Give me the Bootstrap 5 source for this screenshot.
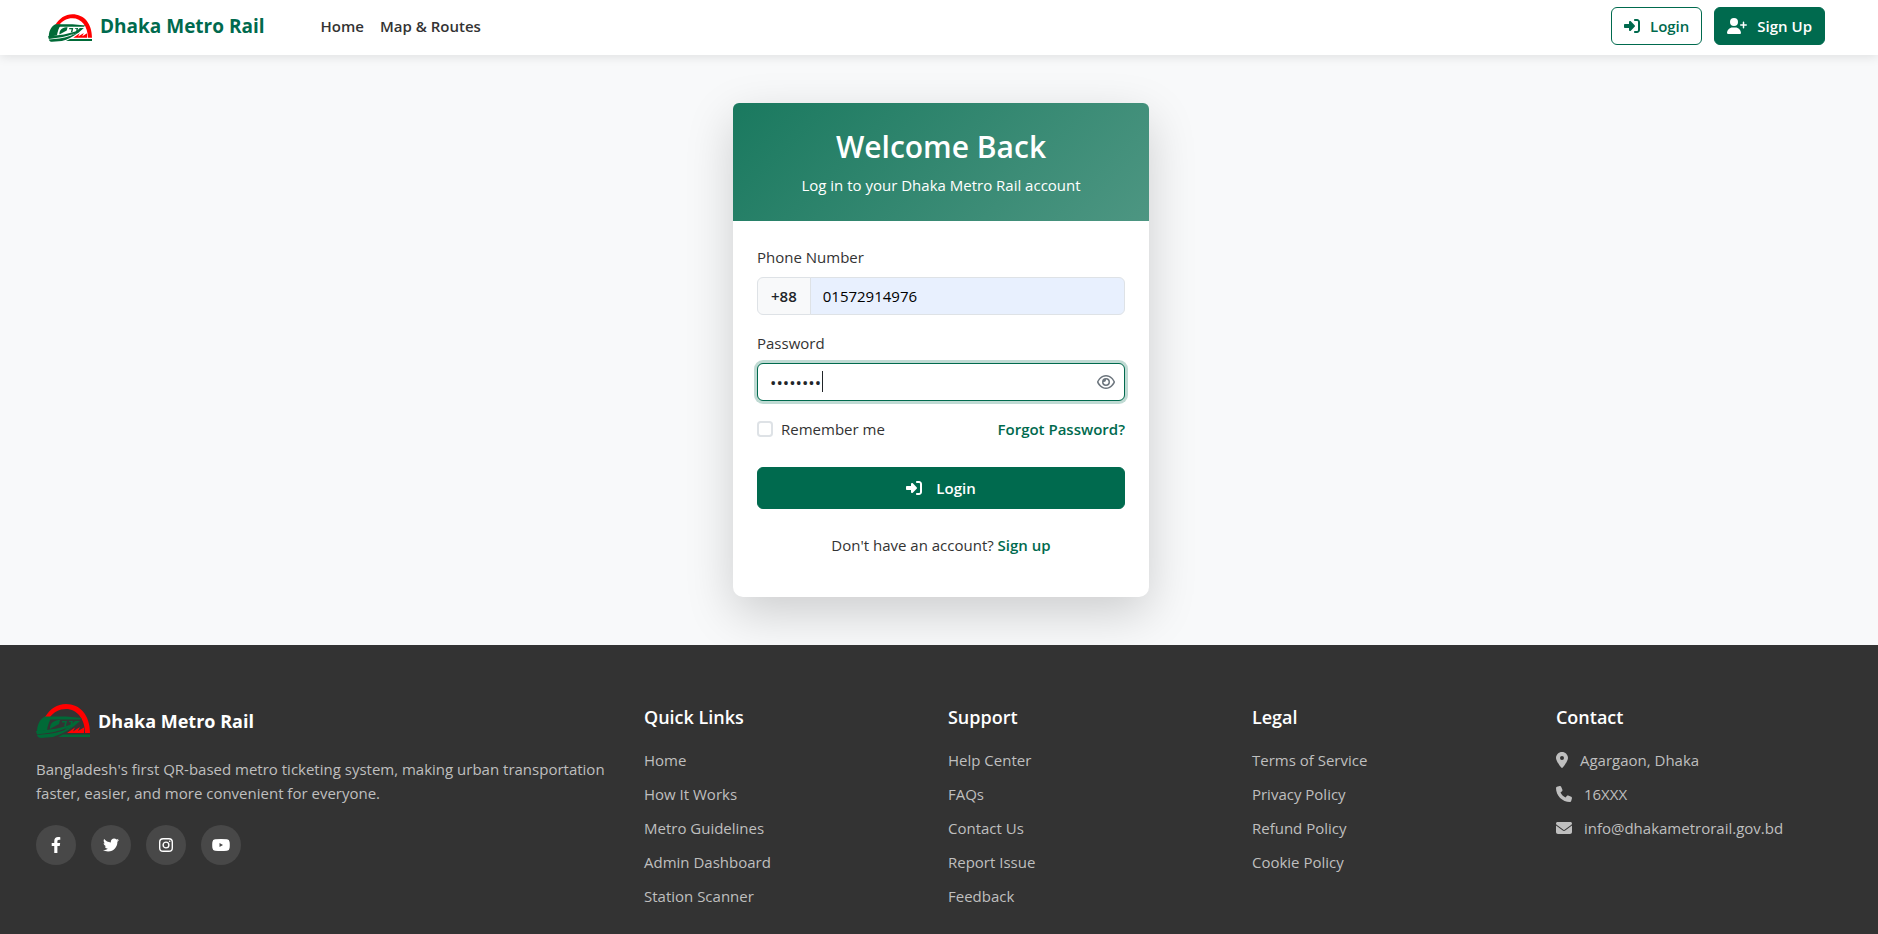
<!DOCTYPE html>
<html lang="en">
<head>
<meta charset="utf-8">
<meta name="viewport" content="width=device-width, initial-scale=1">
<title>Login - Dhaka Metro Rail</title>
<link href="https://cdn.jsdelivr.net/npm/bootstrap@5.3.0/dist/css/bootstrap.min.css" rel="stylesheet">
<style>
:root { --brand: #006a4e; --ink: #333; }
body { font-family: "Open Sans", "Noto Sans", sans-serif; font-size: 15px; line-height: 24px; color: var(--ink); background: #f8f9fa; }
svg { display: block; flex: none; }
a { color: var(--brand); }
.topbar { height: 55px; padding: 0 53px 3px 48px; background: #fff; box-shadow: 0 2px 10px rgba(0,0,0,.1); z-index: 2; }
.brand-name { font-size: 19px; font-weight: 700; }
.topbar .nav-link { color: var(--ink); font-weight: 600; padding: 0 8px; }
.btn-brand, .btn-line { font-size: 15px; font-weight: 600; line-height: 24px; border: 1px solid var(--brand); border-radius: 6px; padding: 6px 12px; display: flex; align-items: center; justify-content: center; gap: 10px; }
.btn-brand { background: var(--brand); color: #fff; }
.btn-line { color: var(--brand); background: #fff; }
.login-area { padding: 48px 0 48px 4px; }
.login-card { width: 416px; background: #fff; border-radius: 10px; box-shadow: 0 16px 48px rgba(0,0,0,.176); }
.login-head { height: 118px; padding-top: 24px; color: #fff; border-radius: 6px 6px 0 0; background: linear-gradient(135deg, #1a795f, #4d9682); }
.login-head h1 { font-size: 30px; font-weight: 600; line-height: 40px; margin: 0 0 6px; }
.login-body { padding: 24px 24px 40px; }
.form-label { margin-bottom: 8px; }
.field { height: 38px; font-size: 15px; padding: 6px 12px; border-color: #dee2e6; border-radius: 6px; }
.filled, .filled:focus { background: #e8f0fe; color: #000; }
.prefix { font-size: 15px; font-weight: 600; background: #f8f9fa; border-color: #dee2e6; border-radius: 6px; padding: 6px 13px; color: #212529; }
.field.secret, .field.secret:focus { font-size: 17px; caret-color: transparent; border-color: var(--brand); box-shadow: 0 0 0 3px rgba(0,106,78,.25); }
.cursor-bar { position: absolute; left: 65px; top: 8px; width: 1px; height: 21px; background: #212529; }
.eye { position: absolute; top: 0; right: 10px; height: 38px; padding: 0; border: 0; background: none; color: #6c757d; }
.form-check-input { width: 16px; height: 16px; margin: 0; border: 2px solid #dee2e6; }
.login-options { margin-bottom: 26px; }
.page-foot { background: #333; color: #bfbfbf; padding: 56px 42px 14px 36px; }
.page-foot .row { --bs-gutter-x: 24px; }
.page-foot h2 { font-size: 18px; font-weight: 600; line-height: 22px; color: #fff; margin: 5px 0 20px; }
.page-foot ul a, .page-foot ul li { color: #bfbfbf; text-decoration: none; }
.page-foot li { margin-bottom: 10px; }
.foot-brand { font-size: 18px; font-weight: 700; color: #fff; }
.foot-text { margin-bottom: 20px; }
.social-row { gap: 15px; }
.social { width: 40px; height: 40px; border-radius: 50%; background: #484848; color: #fff; display: flex; align-items: center; justify-content: center; }
</style>
<script src="https://cdn.jsdelivr.net/npm/bootstrap@5.3.0/dist/js/bootstrap.bundle.min.js"></script>
</head>
<body class="d-flex flex-column min-vh-100">
<svg width="0" height="0" class="position-absolute" aria-hidden="true">
<defs>
<symbol id="logo" viewBox="0 0 54 34">
<path d="M9 13C14 5 21 0 30 0c14 0 24 11 24 29h-5C49 15 41 5 30 5c-7 0-12 3-16 8z" fill="#f00"/>
<path d="M8 12.500h22l16 1.500-2 1.500H13z" fill="#006a37"/>
<path d="M8 13h8c-3 4-4 8-5 13L1 28C1 22 3 16 8 13z" fill="#006a37"/>
<path d="M14 23c1-5 5-7 10-7l-1 4-9 5zM26 17h5l-1 5-2 .5 1-4h-3zM33 17h4l-1 4h-1.500l.5-3h-2zM39 17h5l-7 6-9 3 8-6z" fill="#006a37"/>
<path d="M0 27l12-1.200c10-1 20-3.500 30-8-9 6-17 9-28 11L1 30.500z" fill="#006a37"/>
<path d="M1 31l13-1.200c9-1.500 17-4 24-8-7 6-14 9-21 11.200L5 34c-2 0-3.500-1-4-3z" fill="#006a37"/>
<path d="M31 29l8-5.500-2 4 7-4.500-2 4 6-3.500V29z" fill="#f00"/>
<path d="M27 30.500h27V33H22z" fill="#006a37"/>
</symbol>
<symbol id="login" viewBox="0 0 512 512"><path fill="currentColor" d="M217.900 105.900L340.700 228.700c7.200 7.200 11.300 17.100 11.300 27.300s-4.100 20.100-11.300 27.300L217.900 406.100c-6.400 6.400-15 9.900-24 9.900c-18.700 0-33.900-15.200-33.900-33.900V320H32c-17.700 0-32-14.300-32-32V224c0-17.700 14.300-32 32-32h128V129.900c0-18.700 15.200-33.900 33.900-33.900c9 0 17.600 3.600 24 9.900zM352 416h64c17.700 0 32-14.300 32-32V128c0-17.700-14.300-32-32-32H352c-17.700 0-32-14.300-32-32s14.300-32 32-32h64c53 0 96 43 96 96V384c0 53-43 96-96 96H352c-17.700 0-32-14.300-32-32s14.300-32 32-32z"/></symbol>
</defs>
</svg>

<nav class="topbar navbar navbar-expand flex-nowrap">
<a class="d-flex align-items-center text-decoration-none" href="#"><svg class="mt-1" width="44" height="28"><use href="#logo"/></svg><span class="brand-name ms-2">Dhaka Metro Rail</span></a>
<div class="navbar-nav ms-5 me-auto"><a class="nav-link" href="#">Home</a><a class="nav-link" href="#">Map &amp; Routes</a></div>
<div class="d-flex gap-2">
<a class="btn-line text-decoration-none me-1" href="#"><svg width="16" height="16"><use href="#login"/></svg>Login</a>
<a class="btn-brand text-decoration-none" href="#"><svg width="20" height="16" viewBox="0 0 640 512" fill="currentColor"><path d="M96 128a128 128 0 1 1 256 0A128 128 0 1 1 96 128zM0 482.300C0 383.800 79.800 304 178.300 304h91.400C368.200 304 448 383.800 448 482.300c0 16.400-13.300 29.700-29.700 29.700H29.700C13.300 512 0 498.700 0 482.300zM504 312V248H440c-13.300 0-24-10.700-24-24s10.700-24 24-24h64V136c0-13.300 10.700-24 24-24s24 10.700 24 24v64h64c13.300 0 24 10.700 24 24s-10.700 24-24 24H552v64c0 13.300-10.700 24-24 24s-24-10.700-24-24z"/></svg>Sign Up</a>
</div>
</nav>

<main class="login-area d-flex justify-content-center">
<section class="login-card">
<header class="login-head text-center"><h1>Welcome Back</h1><p class="m-0">Log in to your Dhaka Metro Rail account</p></header>
<form class="login-body">
<div class="mb-3">
<label class="form-label" for="phone">Phone Number</label>
<div class="input-group"><span class="prefix input-group-text">+88</span><input class="field filled form-control" id="phone" type="tel" value="01572914976"></div>
</div>
<label class="form-label" for="password">Password</label>
<div class="position-relative mb-3">
<input class="field secret form-control" id="password" type="password" value="password" autofocus>
<span class="cursor-bar" aria-hidden="true"></span>
<button class="eye" type="button" aria-label="Show password"><svg width="18" height="16" viewBox="0 0 576 512" fill="currentColor"><path d="M288 80c-65.200 0-118.800 29.600-159.900 67.700C89.600 183.500 63 226 49.400 256c13.600 30 40.200 72.500 78.600 108.300C169.200 402.400 222.800 432 288 432s118.800-29.600 159.900-67.700C486.400 328.500 513 286 526.600 256c-13.600-30-40.200-72.500-78.600-108.300C406.800 109.600 353.200 80 288 80zM95.400 112.600C142.500 68.800 207.200 32 288 32s145.500 36.800 192.600 80.600c46.800 43.500 78.100 95.400 93 131.100c3.300 7.900 3.300 16.700 0 24.600c-14.900 35.700-46.200 87.700-93 131.100C433.500 443.200 368.800 480 288 480s-145.500-36.800-192.600-80.600C48.600 356 17.300 304 2.500 268.300c-3.300-7.900-3.300-16.700 0-24.600C17.300 208 48.600 156 95.400 112.600zM288 336c44.200 0 80-35.800 80-80s-35.800-80-80-80c-.700 0-1.300 0-2 0c1.300 5.100 2 10.500 2 16c0 35.300-28.700 64-64 64c-5.500 0-10.900-.7-16-2c0 .7 0 1.300 0 2c0 44.200 35.800 80 80 80zm0-208a128 128 0 1 1 0 256 128 128 0 1 1 0-256z"/></svg></button>
</div>
<div class="login-options d-flex justify-content-between align-items-center">
<div class="d-flex align-items-center gap-2"><input class="form-check-input" type="checkbox" id="remember"><label for="remember">Remember me</label></div>
<a class="fw-semibold text-decoration-none" href="#">Forgot Password?</a>
</div>
<button class="btn-brand w-100 mb-4 py-2" type="submit"><svg width="16" height="16" class="me-1"><use href="#login"/></svg>Login</button>
<p class="text-center m-0">Don't have an account? <a class="fw-semibold text-decoration-none" href="#">Sign up</a></p>
</form>
</section>
</main>

<footer class="page-foot flex-grow-1">
<div class="row">
<div class="col-4">
<div class="d-flex align-items-center mb-3"><svg width="54" height="40"><use href="#logo"/></svg><span class="foot-brand ms-2">Dhaka Metro Rail</span></div>
<p class="foot-text">Bangladesh's first QR-based metro ticketing system, making urban transportation faster, easier, and more convenient for everyone.</p>
<div class="social-row d-flex">
<a class="social" href="#" aria-label="Facebook"><svg width="10" height="16" viewBox="0 0 320 512" fill="currentColor"><path d="M279.140 288l14.220-92.660h-88.910v-60.130c0-25.350 12.420-50.060 52.240-50.060h40.420V6.260S260.430 0 225.360 0c-73.220 0-121.080 44.380-121.080 124.720v70.620H22.890V288h81.390v224h100.170V288z"/></svg></a>
<a class="social" href="#" aria-label="Twitter"><svg width="16" height="16" viewBox="0 0 512 512" fill="currentColor"><path d="M459.370 151.716c.325 4.548.325 9.097.325 13.645 0 138.720-105.583 298.558-298.558 298.558-59.452 0-114.680-17.219-161.137-47.106 8.447.974 16.568 1.299 25.340 1.299 49.055 0 94.213-16.568 130.274-44.832-46.132-.975-84.792-31.188-98.112-72.772 6.498.974 12.995 1.624 19.818 1.624 9.421 0 18.843-1.300 27.614-3.573-48.081-9.747-84.143-51.980-84.143-102.985v-1.299c13.969 7.797 30.214 12.670 47.431 13.319-28.264-18.843-46.781-51.005-46.781-87.391 0-19.492 5.197-37.360 14.294-52.954 51.655 63.675 129.300 105.258 216.365 109.807-1.624-7.797-2.599-15.918-2.599-24.040 0-57.828 46.782-104.934 104.934-104.934 30.213 0 57.502 12.670 76.670 33.137 23.715-4.548 46.456-13.320 66.599-25.340-7.798 24.366-24.366 44.833-46.132 57.827 21.117-2.273 41.584-8.122 60.426-16.243-14.292 20.791-32.161 39.308-52.628 54.253z"/></svg></a>
<a class="social" href="#" aria-label="Instagram"><svg width="14" height="14" viewBox="0 0 14 14" fill="none" stroke="currentColor" stroke-width="1.400"><rect x=".7" y=".7" width="12.600" height="12.600" rx="3.400"/><circle cx="7" cy="7" r="2.900"/><circle cx="10.700" cy="3.300" r=".8" fill="currentColor" stroke="none"/></svg></a>
<a class="social" href="#" aria-label="YouTube"><svg width="18" height="12" viewBox="0 0 18 12"><path fill="currentColor" fill-rule="evenodd" d="M3 .2Q9-.2 15 .2Q17.300.5 17.600 3Q18 6 17.600 9Q17.300 11.500 15 11.800Q9 12.200 3 11.800Q.7 11.500.4 9Q0 6 .4 3Q.7.5 3 .2zM7.500 4v4L11 6z"/></svg></a>
</div>
</div>
<div class="col-2"><h2>Quick Links</h2><ul class="list-unstyled m-0"><li><a href="#">Home</a></li><li><a href="#">How It Works</a></li><li><a href="#">Metro Guidelines</a></li><li><a href="#">Admin Dashboard</a></li><li><a href="#">Station Scanner</a></li></ul></div>
<div class="col-2"><h2>Support</h2><ul class="list-unstyled m-0"><li><a href="#">Help Center</a></li><li><a href="#">FAQs</a></li><li><a href="#">Contact Us</a></li><li><a href="#">Report Issue</a></li><li><a href="#">Feedback</a></li></ul></div>
<div class="col-2"><h2>Legal</h2><ul class="list-unstyled m-0"><li><a href="#">Terms of Service</a></li><li><a href="#">Privacy Policy</a></li><li><a href="#">Refund Policy</a></li><li><a href="#">Cookie Policy</a></li></ul></div>
<div class="col-2"><h2>Contact</h2><ul class="list-unstyled m-0">
<li class="d-flex align-items-center"><svg width="12" height="16" viewBox="0 0 384 512" fill="currentColor" class="me-2"><path d="M215.700 499.200C267 435 384 279.400 384 192C384 86 298 0 192 0S0 86 0 192c0 87.400 117 243 168.300 307.200c12.300 15.300 35.100 15.300 47.400 0zM192 128a64 64 0 1 1 0 128 64 64 0 1 1 0-128z"/></svg><span class="ms-1">Agargaon, Dhaka</span></li>
<li class="d-flex align-items-center"><svg width="16" height="16" viewBox="0 0 512 512" fill="currentColor" class="me-2"><path d="M164.900 24.600c-7.700-18.600-28-28.500-47.400-23.200l-88 24C12.100 30.200 0 46 0 64C0 311.400 200.600 512 448 512c18 0 33.800-12.100 38.600-29.500l24-88c5.300-19.400-4.600-39.700-23.200-47.400l-96-40c-16.300-6.800-35.200-2.100-46.300 11.600L304.700 368C234.300 334.700 177.300 277.700 144 207.300L193.300 167c13.700-11.200 18.400-30 11.600-46.300l-40-96z"/></svg><span class="ms-1">16XXX</span></li>
<li class="d-flex align-items-center"><svg width="16" height="16" viewBox="0 0 512 512" fill="currentColor" class="me-2"><path d="M48 64C21.500 64 0 85.500 0 112c0 15.100 7.100 29.300 19.200 38.400L236.800 313.600c11.400 8.500 27 8.500 38.400 0L492.800 150.400c12.100-9.100 19.200-23.300 19.200-38.400c0-26.500-21.500-48-48-48H48zM0 176V384c0 35.300 28.700 64 64 64H448c35.300 0 64-28.700 64-64V176L294.400 339.200c-22.800 17.100-54 17.100-76.800 0L0 176z"/></svg><span class="ms-1">info@dhakametrorail.gov.bd</span></li>
</ul></div>
</div>
</footer>
</body>
</html>
